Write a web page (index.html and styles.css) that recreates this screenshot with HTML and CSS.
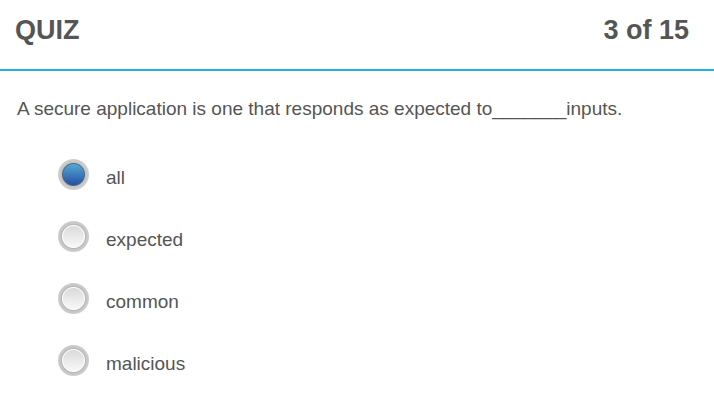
FILE: index.html
```html
<!DOCTYPE html>
<html lang="en">
<head>
<meta charset="utf-8">
<meta name="viewport" content="width=device-width, initial-scale=1">
<title>Quiz</title>
<link rel="stylesheet" href="styles.css">
</head>
<body>
<header class="quiz-header">
<h1 class="title">QUIZ</h1>
<p class="progress">3 of 15</p>
</header>
<main>
<form>
<fieldset class="question">
<legend class="prompt">A secure application is one that responds as expected to_______inputs.</legend>
<div class="options">
<label class="option"><input class="radio" type="radio" name="answer" value="all" checked><span>all</span></label>
<label class="option"><input class="radio" type="radio" name="answer" value="expected"><span>expected</span></label>
<label class="option"><input class="radio" type="radio" name="answer" value="common"><span>common</span></label>
<label class="option"><input class="radio" type="radio" name="answer" value="malicious"><span>malicious</span></label>
</div>
</fieldset>
</form>
</main>
</body>
</html>
```
FILE: styles.css
```css
* {
  box-sizing: border-box;
}

body {
  margin: 0;
  background: #fff;
  color: #555;
  font-family: "Liberation Sans", Arial, sans-serif;
}

.quiz-header {
  display: flex;
  justify-content: space-between;
  align-items: center;
  padding: 14px 25px 23px 15px;
  border-bottom: 2px solid #1fb1e3;
}

.title,
.progress {
  margin: 0;
  font-size: 27px;
  font-weight: bold;
  line-height: 32px;
}

.question {
  min-width: 0;
  margin: 0;
  padding: 26px 17px;
  border: 0;
}

.prompt {
  float: left;
  width: 100%;
  padding: 0;
  font-size: 19px;
  line-height: 24px;
}

.options {
  clear: both;
  display: flex;
  flex-direction: column;
  align-items: flex-start;
  gap: 31px;
  padding: 38px 0 0 41px;
}

.option {
  display: flex;
  align-items: flex-start;
  gap: 17px;
  height: 31px;
  font-size: 19px;
  line-height: 24px;
}

.option span {
  padding-top: 7px;
}

.radio {
  appearance: none;
  flex: none;
  width: 31px;
  height: 31px;
  margin: 0;
  border-radius: 50%;
  background:
    radial-gradient(circle closest-side, transparent 10px, #fff 11px, #b6b6b6 12px, #c6c6c6 13px, #cecece 100%),
    linear-gradient(#dadada 5px, #f8f8f8 26px);
}

.radio:checked {
  background:
    radial-gradient(circle closest-side, transparent 10px, #51677e 11px, #c4c4c4 12px, #cbcbcb 14px, #d2d2d2 100%),
    linear-gradient(#55a9d2 5px, #2450a4 26px);
}
```
